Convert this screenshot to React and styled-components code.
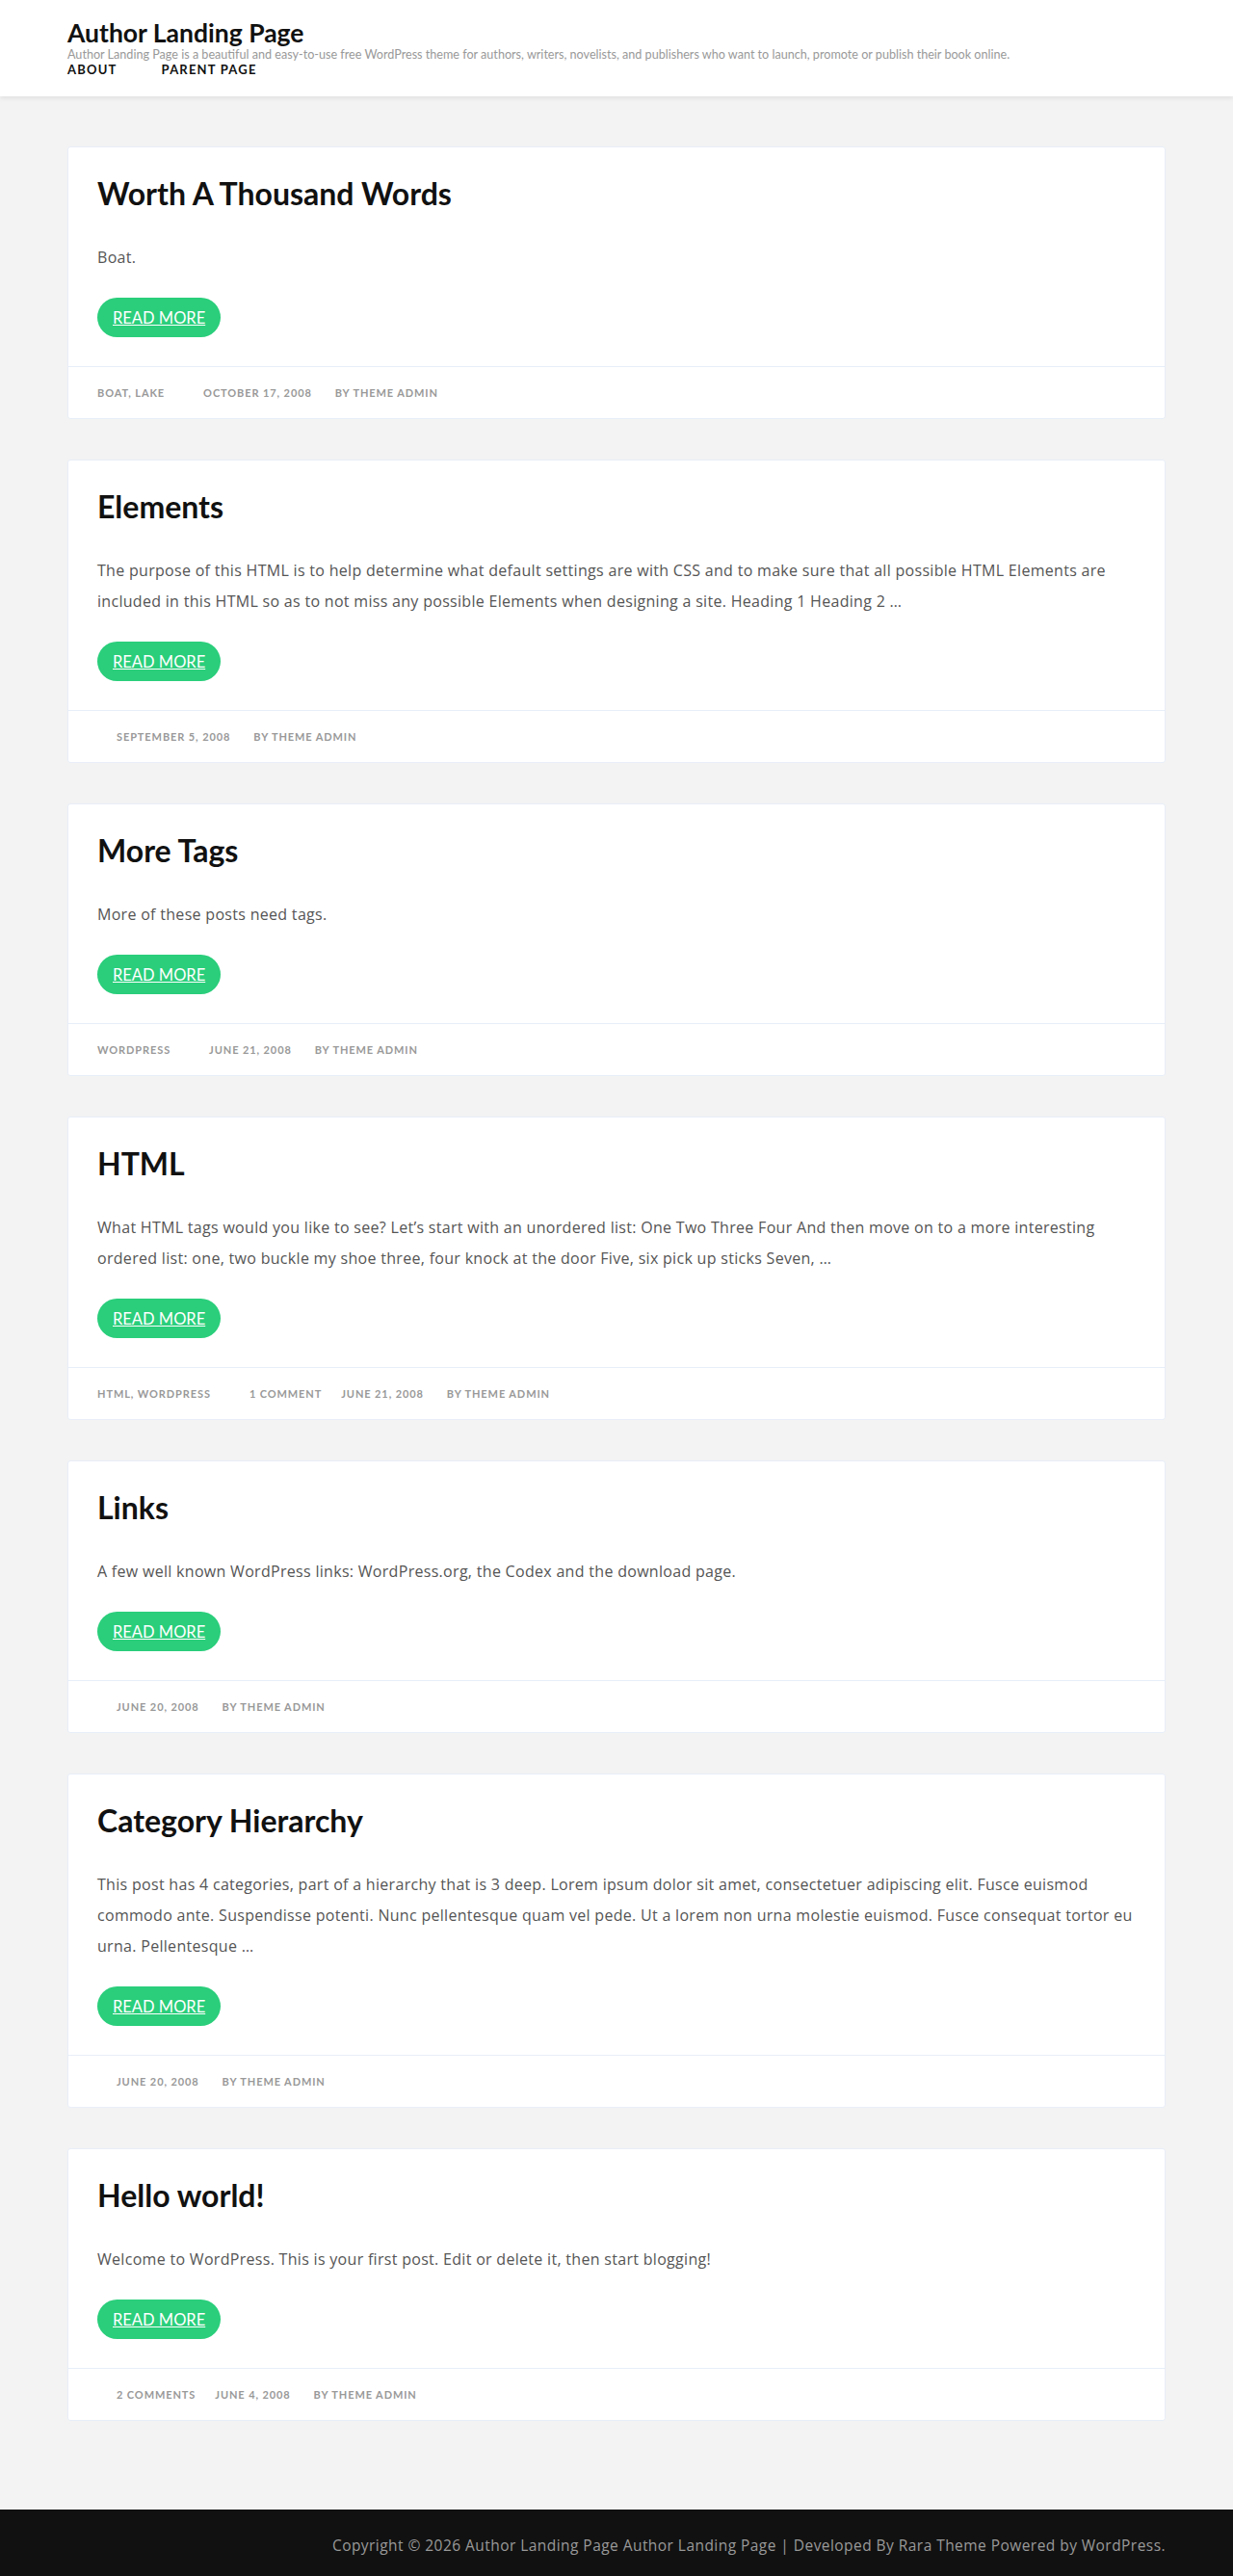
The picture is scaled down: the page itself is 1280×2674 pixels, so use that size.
import React from 'react';
import styled, {createGlobalStyle} from 'styled-components';

const GlobalStyle = createGlobalStyle`
    body {
        margin: 0;
        background: #f3f3f3;
        font-family: 'Open Sans', 'Liberation Sans', sans-serif;
        color: #555;
    }
`;

const Header = styled.header`
    background: #fff;
    height: 100px;
    box-shadow: 0 2px 5px rgba(0,0,0,0.08);
    position: relative;
`;

const Container = styled.div`
    width: 1140px;
    margin: 0 auto;
`;

const Branding = styled.div`
    padding-top: 19px;
`;

const SiteTitle = styled.h1`
    font-family: 'Lato', sans-serif;
    font-weight: 700;
    font-size: 26.5px;
    line-height: 30px;
    margin: 0;
    color: #111;
`;

const Tagline = styled.p`
    font-family: 'Lato', sans-serif;
    font-size: 12.6px;
    line-height: 15px;
    color: #999;
    margin: 0;
`;

const Nav = styled.nav`
    display: flex;
    gap: 46px;
`;

const NavLink = styled.a`
    font-family: 'Lato', sans-serif;
    font-weight: 700;
    font-size: 13px;
    line-height: 16px;
    letter-spacing: 1.2px;
    text-transform: uppercase;
    color: #111;
    text-decoration: none;
`;

const Main = styled.main`
    padding: 52px 0 50px;
`;

const Card = styled.article`
    background: #fff;
    border: 1px solid #e8eef8;
    border-radius: 3px;
    margin-bottom: 42px;
`;

const CardBody = styled.div`
    padding: 30px;
`;

const PostTitle = styled.h2`
    font-family: 'Lato', sans-serif;
    font-weight: 700;
    font-size: 32px;
    line-height: 36px;
    color: #111;
    margin: 0 0 32px;
`;

const Excerpt = styled.p`
    font-size: 16px;
    line-height: 32px;
    letter-spacing: 0.3px;
    margin: 0 0 26px;
    color: #555;
`;

const ReadMore = styled.a`
    display: inline-flex;
    align-items: center;
    height: 41px;
    padding: 0 16px;
    border-radius: 21px;
    background: #2ace7b;
    color: #fff;
    font-family: 'Lato', sans-serif;
    font-size: 16.5px;
    text-decoration: underline;
`;

const CardFooter = styled.div`
    border-top: 1px solid #e8eef8;
    padding: 20px 30px;
    display: flex;
    align-items: center;
`;

const Meta = styled.span`
    font-family: 'Lato', sans-serif;
    font-size: 11px;
    line-height: 13px;
    font-weight: 700;
    letter-spacing: 0.9px;
    text-transform: uppercase;
    color: #999;
    margin-right: ${props => props.gap || 24}px;
    padding-left: ${props => props.lead || 0}px;
`;

const Footer = styled.footer`
    background: #111;
    height: 73px;
    display: flex;
    align-items: center;
`;

const Copy = styled.p`
    margin: 0;
    text-align: right;
    font-size: 15.5px;
    letter-spacing: 0.45px;
    color: #999;
`;

const posts = [
    {
        title: 'Worth A Thousand Words',
        excerpt: 'Boat.',
        cats: 'Boat, Lake',
        date: 'October 17, 2008',
    },
    {
        title: 'Elements',
        excerpt: 'The purpose of this HTML is to help determine what default settings are with CSS and to make sure that all possible HTML Elements are included in this HTML so as to not miss any possible Elements when designing a site. Heading 1 Heading 2 …',
        date: 'September 5, 2008',
    },
    {
        title: 'More Tags',
        excerpt: 'More of these posts need tags.',
        cats: 'WordPress',
        date: 'June 21, 2008',
    },
    {
        title: 'HTML',
        excerpt: 'What HTML tags would you like to see? Let’s start with an unordered list: One Two Three Four And then move on to a more interesting ordered list: one, two buckle my shoe three, four knock at the door Five, six pick up sticks Seven, …',
        cats: 'HTML, WordPress',
        comments: '1 Comment',
        date: 'June 21, 2008',
    },
    {
        title: 'Links',
        excerpt: 'A few well known WordPress links: WordPress.org, the Codex and the download page.',
        date: 'June 20, 2008',
    },
    {
        title: 'Category Hierarchy',
        excerpt: 'This post has 4 categories, part of a hierarchy that is 3 deep. Lorem ipsum dolor sit amet, consectetuer adipiscing elit. Fusce euismod commodo ante. Suspendisse potenti. Nunc pellentesque quam vel pede. Ut a lorem non urna molestie euismod. Fusce consequat tortor eu urna. Pellentesque …',
        date: 'June 20, 2008',
    },
    {
        title: 'Hello world!',
        excerpt: 'Welcome to WordPress. This is your first post. Edit or delete it, then start blogging!',
        comments: '2 Comments',
        date: 'June 4, 2008',
    },
];

const Post = ({title, excerpt, cats, comments, date}) => {
    return <Card>
        <CardBody>
            <PostTitle>{title}</PostTitle>
            <Excerpt>{excerpt}</Excerpt>
            <ReadMore href="#">READ MORE</ReadMore>
        </CardBody>
        <CardFooter>
            {cats && <Meta gap={20}>{cats}</Meta>}
            {comments && <Meta lead={20} gap={20}>{comments}</Meta>}
            <Meta lead={comments ? 0 : 20}>{date}</Meta>
            <Meta>By Theme Admin</Meta>
        </CardFooter>
    </Card>
}

const App = () => {
    return <>
        <GlobalStyle />
        <Header>
            <Container>
                <Branding>
                    <SiteTitle>Author Landing Page</SiteTitle>
                    <Tagline>Author Landing Page is a beautiful and easy-to-use free WordPress theme for authors, writers, novelists, and publishers who want to launch, promote or publish their book online.</Tagline>
                    <Nav>
                        <NavLink href="#">About</NavLink>
                        <NavLink href="#">Parent Page</NavLink>
                    </Nav>
                </Branding>
            </Container>
        </Header>
        <Main>
            <Container>
                {posts.map(p => <Post key={p.title} {...p} />)}
            </Container>
        </Main>
        <Footer>
            <Container>
                <Copy>Copyright © 2026 Author Landing Page Author Landing Page | Developed By Rara Theme Powered by WordPress.</Copy>
            </Container>
        </Footer>
    </>
}

export default App;
